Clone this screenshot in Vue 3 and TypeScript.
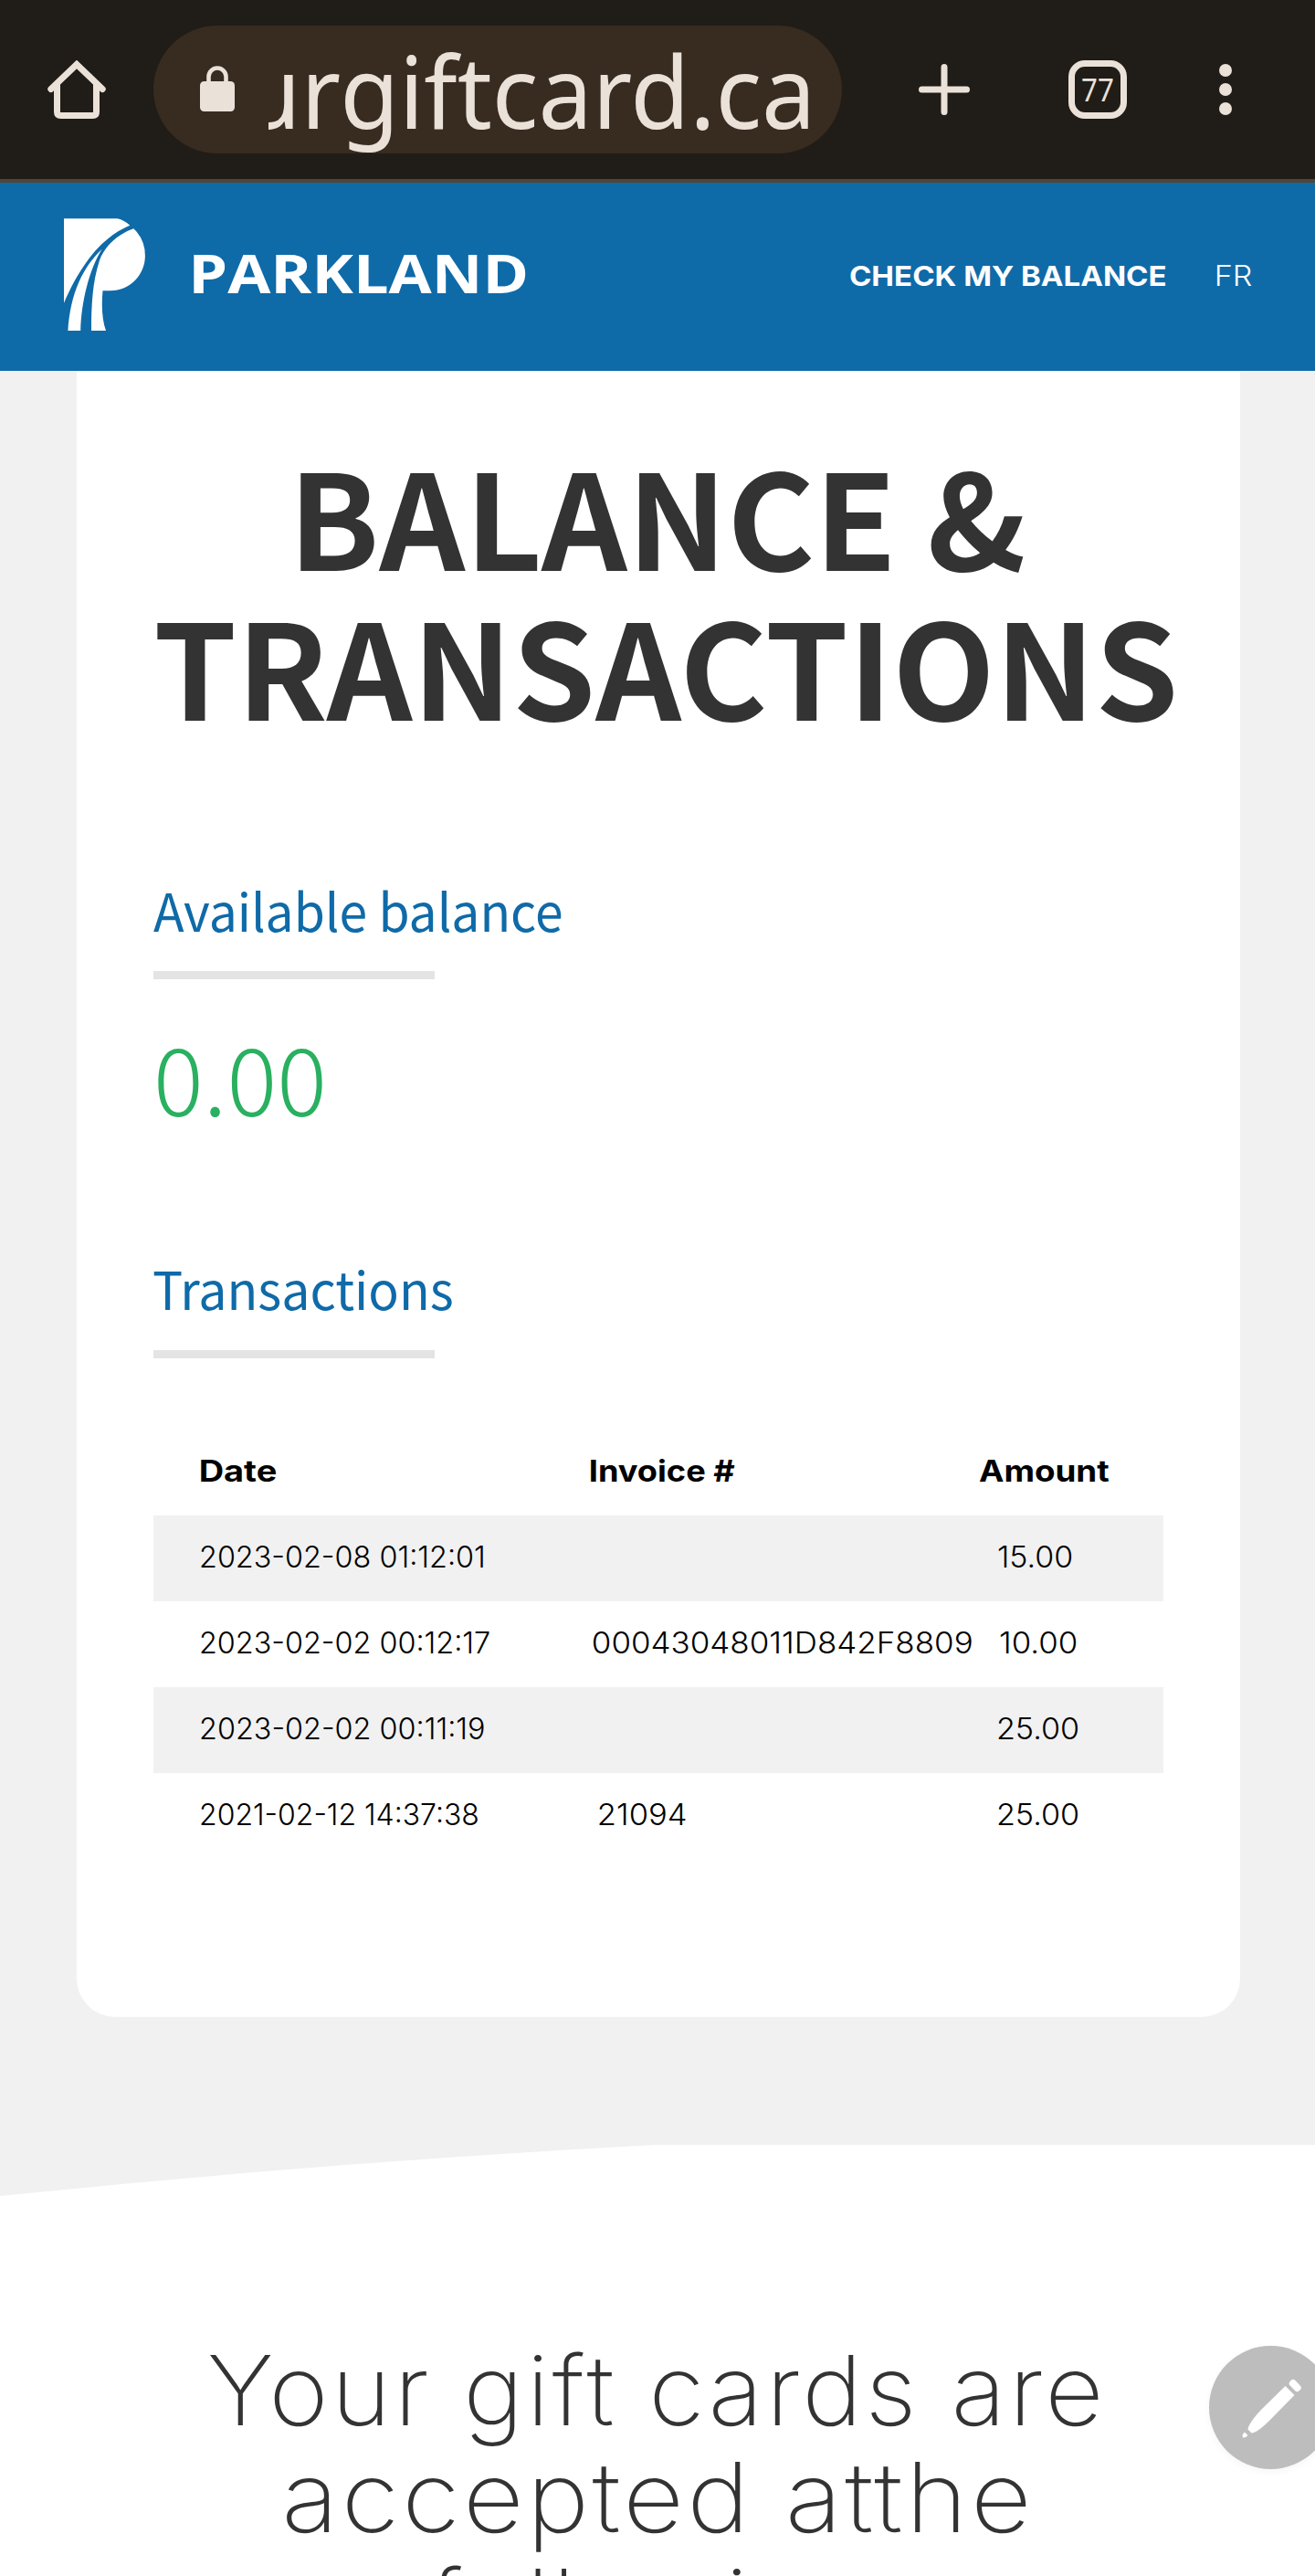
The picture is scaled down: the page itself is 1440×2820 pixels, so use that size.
<script setup lang="ts">
interface Cell {
  text: string
  width: number
  indent: number
}
interface Row {
  date: Cell
  invoice: Cell
  amount: Cell
}

// Stretches a line of text horizontally so that its ink spans the given width.
const vFit = {
  mounted(el: HTMLElement, binding: { value: number }) {
    const ctx = document.createElement('canvas').getContext('2d')
    const text = el.textContent ?? ''
    if (!ctx || !text) return
    const cs = getComputedStyle(el)
    ctx.font = `${cs.fontWeight} ${cs.fontSize} ${cs.fontFamily}`
    const m = ctx.measureText(text)
    const range = document.createRange()
    range.selectNodeContents(el)
    // The laid-out advance can differ a little from the canvas one (optical sizing).
    const ratio = range.getBoundingClientRect().width / m.width
    const left = m.actualBoundingBoxLeft * ratio
    const ink = (m.actualBoundingBoxRight + m.actualBoundingBoxLeft) * ratio
    const scale = binding.value / ink
    el.style.width = `${binding.value}px`
    el.style.transform = `translateX(${left * scale}px) scaleX(${scale})`
  },
}

const rows: Row[] = [
  {
    date: { text: '2023-02-08 01:12:01', width: 309, indent: 0 },
    invoice: { text: '', width: 0, indent: 0 },
    amount: { text: '15.00', width: 80, indent: 21 },
  },
  {
    date: { text: '2023-02-02 00:12:17', width: 316, indent: 0 },
    invoice: { text: '00043048011D842F8809', width: 414, indent: 3 },
    amount: { text: '10.00', width: 83, indent: 23 },
  },
  {
    date: { text: '2023-02-02 00:11:19', width: 310, indent: 0 },
    invoice: { text: '', width: 0, indent: 0 },
    amount: { text: '25.00', width: 87, indent: 21 },
  },
  {
    date: { text: '2021-02-12 14:37:38', width: 303, indent: 0 },
    invoice: { text: '21094', width: 95, indent: 9 },
    amount: { text: '25.00', width: 87, indent: 21 },
  },
]
</script>

<template>
  <div class="page">
    <div class="browser">
      <svg class="home" width="64" height="64" viewBox="0 0 64 64" fill="none" stroke="#eae1d9" stroke-width="7" stroke-linecap="round" stroke-linejoin="round">
        <path d="M3.800 31.500 32 4.500 60.200 31.500" stroke-linejoin="miter" />
        <path d="M10.500 27V56.500q0 4 4 4h35q4 0 4-4V27" />
      </svg>
      <div class="pill">
        <svg class="lock" width="38" height="50" viewBox="0 0 38 50">
          <rect x="0" y="17" width="38" height="33" rx="4.500" fill="#eae1d9" />
          <path d="M9.500 19V12a9.500 9.500 0 0 1 19 0v7" fill="none" stroke="#eae1d9" stroke-width="4.600" />
        </svg>
        <div class="url"><span v-fit="613" class="line">urgiftcard.ca</span></div>
      </div>
      <svg class="plus" width="56" height="56" viewBox="0 0 56 56" stroke="#eae1d9" stroke-width="7" stroke-linecap="round">
        <path d="M28 3.500V52.500M3.500 28H52.500" />
      </svg>
      <div class="tabs"><span v-fit="34" class="line">77</span></div>
      <svg class="dots" width="14" height="56" viewBox="0 0 14 56" fill="#eae1d9">
        <circle cx="7" cy="7" r="7" />
        <circle cx="7" cy="28" r="7" />
        <circle cx="7" cy="49" r="7" />
      </svg>
    </div>

    <header class="header">
      <svg width="89" height="123" viewBox="70 239 89 123" fill="#fff">
        <path d="M70 239.300H128.500Q136 241 142.300 246.700C124 254 108 269 97.500 283C84 301 76.500 317 70 331.700Z" />
        <path d="M146.300 250.300Q158.900 262 158.900 280C158.900 300 143 318.300 120.300 318.300H112.500Q110 345 116 362H100C100 336 101 309 109 285C114 271 127 257 146.300 250.300Z" />
        <path d="M74.400 362H88.200C89 330 98 294 111.600 272.700C91 292 77 321 74.400 362Z" />
      </svg>
      <span v-fit="364" class="line brand">PARKLAND</span>
      <span v-fit="345" class="line check">CHECK MY BALANCE</span>
      <span v-fit="39" class="line lang">FR</span>
    </header>

    <main class="body">
      <section class="card">
        <h1 class="title">
          <span v-fit="792" class="line first">BALANCE &amp;</span>
          <span v-fit="1113" class="line second">TRANSACTIONS</span>
        </h1>
        <h2 class="sub available"><span v-fit="447" class="line">Available balance</span></h2>
        <div class="rule"></div>
        <div class="amount"><span v-fit="180" class="line">0.00</span></div>
        <h2 class="sub trans"><span v-fit="327" class="line">Transactions</span></h2>
        <div class="rule second-rule"></div>
        <div class="table">
          <div class="row head">
            <div><span v-fit="82" class="line">Date</span></div>
            <div><span v-fit="158" class="line">Invoice #</span></div>
            <div><span v-fit="143" class="line">Amount</span></div>
          </div>
          <div v-for="(row, i) in rows" :key="i" class="row" :class="{ striped: i % 2 === 0 }">
            <div v-for="(cell, j) in [row.date, row.invoice, row.amount]" :key="j" :style="{ paddingLeft: cell.indent + 'px' }">
              <span v-if="cell.text" v-fit="cell.width" class="line">{{ cell.text }}</span>
            </div>
          </div>
        </div>
      </section>
    </main>

    <svg class="curve" width="1440" height="56" viewBox="0 0 1440 56">
      <path d="M0 56Q359 19 718 0H1440V56Z" fill="#fff" />
    </svg>

    <section class="accepted">
      <span v-fit="976" class="line lead">Your gift cards are</span>
      <span v-fit="813" class="line">accepted atthe</span>
      <span v-fit="480" class="line tail">following</span>
    </section>

    <div class="fab">
      <svg width="135" height="135" viewBox="0 0 135 135" fill="#fff">
        <path d="M83.500 44 93.500 54 67 81Q53 95 46.500 95.500L42.500 91.500Q43 85 57 70Z" />
        <rect x="87" y="39.500" width="14.500" height="8" rx="3.500" transform="rotate(46 94.200 43.500)" />
        <path d="M39 94.500 42.500 98Q40 101 37 100.500Q35.500 97.500 39 94.500Z" />
      </svg>
    </div>
  </div>
</template>

<style>
html,
body {
  margin: 0;
  background: #fff;
}
</style>

<style scoped>
.page {
  position: relative;
  width: 1440px;
  height: 2820px;
  overflow: hidden;
  background: #fff;
  font-family: Inter, sans-serif;
  font-optical-sizing: none;
}
.line {
  display: block;
  flex: none;
  white-space: pre;
  transform-origin: 0 50%;
}
.browser {
  box-sizing: border-box;
  display: flex;
  align-items: center;
  height: 200px;
  padding-left: 52px;
  background: #201c17;
  border-bottom: 4px solid #50463a;
}
.browser > * {
  flex: none;
}
.pill {
  display: flex;
  align-items: center;
  box-sizing: border-box;
  width: 754px;
  height: 140px;
  margin-left: 52px;
  padding-left: 51px;
  border-radius: 70px;
  background: #382b20;
}
.url {
  display: flex;
  justify-content: flex-end;
  width: 591px;
  height: 140px;
  margin-left: 37px;
  overflow: hidden;
  font: 400 110px/140px "Noto Sans", sans-serif;
  color: #eae1d9;
}
.lock {
  margin-top: -2px;
}
.plus {
  margin-left: 84px;
}
.tabs {
  box-sizing: border-box;
  width: 64px;
  height: 64px;
  margin-left: 108px;
  padding-left: 8px;
  border: 7px solid #eae1d9;
  border-radius: 18px;
  font: 400 35px/49px "Noto Sans", sans-serif;
  color: #eae1d9;
}
.dots {
  margin-left: 101px;
}
.header {
  box-sizing: border-box;
  display: flex;
  align-items: flex-start;
  height: 206px;
  padding: 39px 0 0 70px;
  background: #0f6aa8;
  color: #fff;
}
.brand {
  margin: 29px 0 0 53px;
  font: 700 59px/60px "Open Sans", sans-serif;
}
.check {
  margin: 43px 0 0 355px;
  font-size: 30.5px;
  font-weight: 700;
  line-height: 40px;
}
.lang {
  margin: 43px 0 0 56px;
  font-size: 30.5px;
  font-weight: 300;
  line-height: 40px;
}
.body {
  height: 1942px;
  background: #f1f1f1;
}
.card {
  box-sizing: border-box;
  width: 1274px;
  height: 1802px;
  margin-left: 84px;
  padding: 74px 84px 0;
  border-radius: 0 0 42px 42px;
  background: #fff;
}
.title {
  margin: 0;
  font: 700 145px/164px "Noto Sans CJK SC", sans-serif;
  color: #333;
}
.first {
  margin-left: 161px;
}
.second {
  margin-left: 4px;
}
.sub {
  margin: 0;
  font: 400 57px/60px "Noto Sans CJK SC", sans-serif;
  color: #0f6aa8;
}
.available {
  margin-top: 157px;
}
.rule {
  width: 308px;
  height: 9px;
  margin-top: 38px;
  background: #e4e4e4;
}
.amount {
  margin-top: 56px;
  padding-left: 5px;
  font: 200 103px/100px "Noto Sans CJK SC", sans-serif;
  color: #29b060;
}
.trans {
  margin-top: 151px;
}
.second-rule {
  margin-top: 39px;
}
.table {
  width: 1106px;
  margin-top: 78px;
  color: #000;
}
.row {
  box-sizing: border-box;
  display: grid;
  grid-template-columns: 427px 425px 1fr;
  height: 94px;
  padding-left: 52px;
  font-size: 32.5px;
  font-weight: 340;
  line-height: 91px;
}
.head {
  font-size: 32px;
  font-weight: 700;
}
.striped {
  background: #f1f1f1;
}
.curve {
  display: block;
  background: #f1f1f1;
}
.accepted {
  display: flex;
  flex-direction: column;
  align-items: center;
  margin-top: 154px;
  font-size: 106px;
  font-weight: 235;
  line-height: 117px;
  letter-spacing: 3px;
  color: #333;
}
.lead {
  margin-right: 4px;
}
.tail {
  margin-right: 18px;
}
.fab {
  position: absolute;
  top: 2568px;
  left: 1324px;
  width: 135px;
  height: 135px;
  border-radius: 50%;
  background: #bdbdbd;
  box-shadow: 0 3px 8px rgba(0, 0, 0, 0.04);
}
</style>
